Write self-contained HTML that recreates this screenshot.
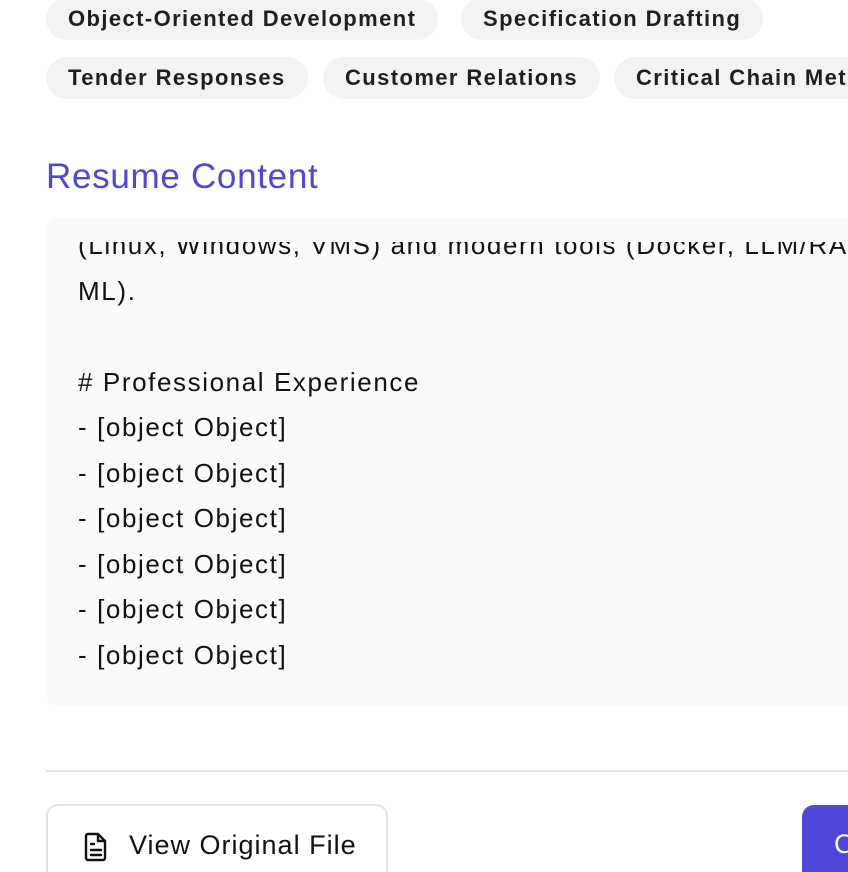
<!DOCTYPE html>
<html><head><style>
body{margin:0;width:848px;height:872px;overflow:hidden;background:#fff;font-family:"Liberation Sans",sans-serif}
#w{position:relative;width:848px;height:872px;overflow:hidden}
.tag{position:absolute;height:42px;border-radius:21px;background:#f3f3f3;font-size:22px;font-weight:bold;color:#1f1f1f;line-height:42px;padding:0 22px;white-space:nowrap;letter-spacing:1.4px}
h2{position:absolute;left:46px;top:157px;margin:0;font-size:35px;font-weight:normal;color:#4f46db;letter-spacing:0.7px}
.box{position:absolute;left:46px;top:218px;right:0;height:488px;background:#fafaf9;border-radius:12px 0 0 12px}
.clip{position:absolute;left:0;top:24px;right:0;height:450px;overflow:hidden}
.txt{position:absolute;left:32px;top:-19px;font-size:26px;line-height:45.5px;color:#111;white-space:pre;letter-spacing:1.6px}
.hr{position:absolute;left:46px;right:0;top:770px;height:2px;background:#e5e5e5}
.btn{position:absolute;left:46px;top:804px;width:342px;height:90px;border:2px solid #e3e3e3;border-radius:12px;box-sizing:border-box}
.btn span{position:absolute;left:81px;top:24px;font-size:27px;color:#111;letter-spacing:1px}
.pb{position:absolute;left:802px;top:805px;width:46px;height:80px;background:#4f46db;border-radius:12px 0 0 12px;overflow:hidden}
</style></head><body><div id="w">
<div class="tag" style="left:46px;top:-2px">Object-Oriented Development</div>
<div class="tag" style="left:461px;top:-2px">Specification Drafting</div>
<div class="tag" style="left:46px;top:57px">Tender Responses</div>
<div class="tag" style="left:323px;top:57px">Customer Relations</div>
<div class="tag" style="left:614px;top:57px">Critical Chain Method</div>
<h2>Resume Content</h2>
<div class="box"><div class="clip"><div class="txt">(Linux, Windows, VMS) and modern tools (Docker, LLM/RAG,
ML).

# Professional Experience
- [object Object]
- [object Object]
- [object Object]
- [object Object]
- [object Object]
- [object Object]</div></div></div>
<div class="hr"></div>
<div class="btn"><svg style="position:absolute;left:36px;top:26px" width="24" height="30" viewBox="0 0 24 30" fill="none" stroke="#111" stroke-width="2.4" stroke-linejoin="round"><path d="M4 2h10l7 7v17a2 2 0 0 1-2 2H4a2 2 0 0 1-2-2V4a2 2 0 0 1 2-2z"/><path d="M14 2v7h7"/><path d="M7 12h3M7 18h10M7 23h10" stroke-linecap="round"/></svg><span>View Original File</span></div>
<div class="pb"><span style="position:absolute;left:32px;top:24px;color:#fff;font-size:27px">C</span></div>
</div></body></html>
